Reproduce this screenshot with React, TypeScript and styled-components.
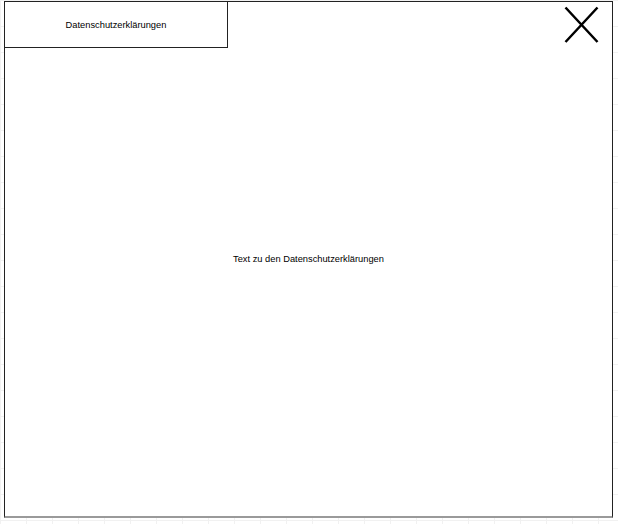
import React from "react";
import styled, { createGlobalStyle } from "styled-components";

const Global = createGlobalStyle`
  html, body {
    margin: 0;
    padding: 0;
    background-color: #ffffff;
    background-image:
      linear-gradient(to right, #f1f1f1 1px, transparent 1px),
      linear-gradient(to bottom, #f1f1f1 1px, transparent 1px);
    background-size: 26px 26px;
    background-position: 0 0;
    min-height: 524px;
    font-family: "Liberation Sans", Arial, Helvetica, sans-serif;
  }
`;

const Page = styled.div`
  padding: 1px 0 0 4px;
`;

const Frame = styled.div`
  box-sizing: border-box;
  width: 609px;
  height: 517px;
  background: #ffffff;
  border: 1px solid #222222;
  border-bottom: 2px solid #9a9a9a;
  display: grid;
  grid-template-columns: 1fr;
  grid-template-rows: 1fr;
`;

const Header = styled.div`
  grid-area: 1 / 1;
  align-self: start;
  display: flex;
  justify-content: space-between;
  align-items: flex-start;
`;

const Tab = styled.div`
  box-sizing: border-box;
  width: 223px;
  height: 46px;
  border-right: 1px solid #222222;
  border-bottom: 1px solid #222222;
  display: flex;
  align-items: center;
  justify-content: center;
  font-size: 9.3px;
  color: #000000;
`;

const CloseButton = styled.div`
  width: 36px;
  height: 38px;
  margin: 4px 12px 0 0;
  display: flex;
  align-items: center;
  justify-content: center;
`;

const Body = styled.div`
  grid-area: 1 / 1;
  display: flex;
  align-items: center;
  justify-content: center;
  font-size: 9.3px;
  color: #000000;
`;

export default function App() {
  return (
    <>
      <Global />
      <Page>
        <Frame>
          <Body>Text zu den Datenschutzerklärungen</Body>
          <Header>
            <Tab>Datenschutzerklärungen</Tab>
            <CloseButton>
              <svg width="36" height="38" viewBox="0 0 36 38">
                <path d="M1.5 1.5 L33.5 36 M33.5 1.5 L1.5 36" stroke="#000" strokeWidth="2.5" fill="none" />
              </svg>
            </CloseButton>
          </Header>
        </Frame>
      </Page>
    </>
  );
}
